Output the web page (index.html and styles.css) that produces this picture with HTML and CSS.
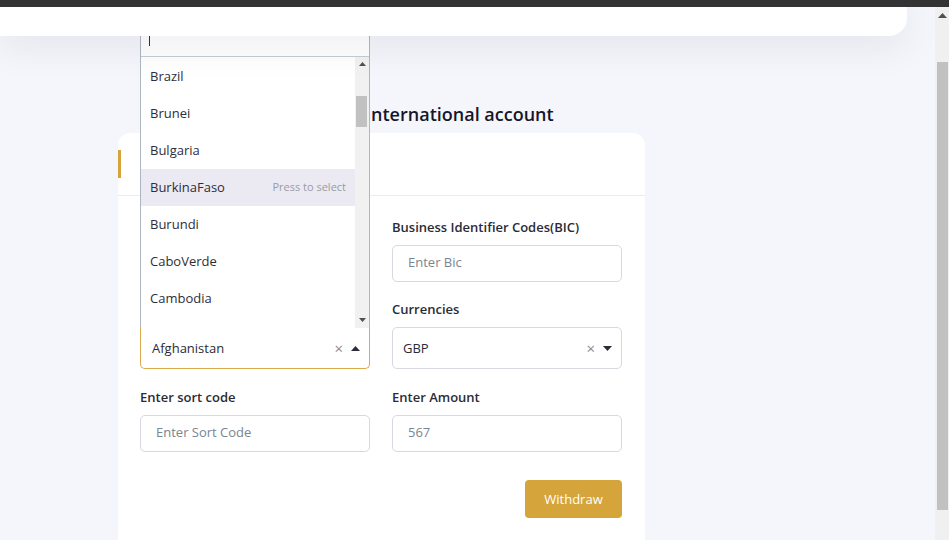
FILE: index.html
```html
<!DOCTYPE html>
<html lang="en">
<head>
<meta charset="utf-8">
<title>Withdraw</title>
<link rel="stylesheet" href="styles.css">
</head>
<body>
<div class="topbar"></div>
<div class="viewport">
  <div class="main">
    <header class="header"></header>
    <section class="content">
      <h1 class="title">Withdraw to an international account</h1>
      <div class="card">
        <div class="tabs">
          <div class="tab tab-active"><span class="covered">Bank transfer</span></div>
        </div>
        <div class="form">
          <div class="field">
            <div class="label covered">IBAN</div>
            <div class="input placeholder"><span class="covered">Enter IBAN</span></div>
          </div>
          <div class="field">
            <div class="label">Business Identifier Codes(BIC)</div>
            <div class="input placeholder">Enter Bic</div>
          </div>
          <div class="field">
            <div class="label covered">Country</div>
            <div class="select select-open">
              <span class="select-value">Afghanistan</span>
              <span class="clear">×</span>
              <svg class="caret" width="9" height="5" viewBox="0 0 9 5"><path d="M0 5 L4.5 0 L9 5 Z" fill="#2b2b3a"/></svg>
              <div class="dropdown">
                <div class="search"><span class="cursor"></span></div>
                <div class="list-wrap">
                  <ul class="list">
                    <li class="option">Brazil</li>
                    <li class="option">Brunei</li>
                    <li class="option">Bulgaria</li>
                    <li class="option option-hover">BurkinaFaso<span class="hint">Press to select</span></li>
                    <li class="option">Burundi</li>
                    <li class="option">CaboVerde</li>
                    <li class="option">Cambodia</li>
                  </ul>
                  <div class="list-scroll">
                    <svg class="arrow" width="7" height="4" viewBox="0 0 7 4"><path d="M0 4 L3.5 0 L7 4 Z" fill="#505050"/></svg>
                    <div class="list-track"><div class="list-thumb"></div></div>
                    <svg class="arrow" width="7" height="4" viewBox="0 0 7 4"><path d="M0 0 L3.5 4 L7 0 Z" fill="#505050"/></svg>
                  </div>
                </div>
              </div>
            </div>
          </div>
          <div class="field">
            <div class="label">Currencies</div>
            <div class="select">
              <span class="select-value">GBP</span>
              <span class="clear">×</span>
              <svg class="caret" width="9" height="5" viewBox="0 0 9 5"><path d="M0 0 L4.5 5 L9 0 Z" fill="#2b2b3a"/></svg>
            </div>
          </div>
          <div class="field field-low">
            <div class="label">Enter sort code</div>
            <div class="input placeholder">Enter Sort Code</div>
          </div>
          <div class="field field-low">
            <div class="label">Enter Amount</div>
            <div class="input value">567</div>
          </div>
          <div class="actions">
            <button class="btn">Withdraw</button>
          </div>
        </div>
      </div>
    </section>
  </div>
  <div class="scrollbar">
    <svg class="page-arrow" width="9" height="5" viewBox="0 0 9 5"><path d="M0 5 L4.5 0 L9 5 Z" fill="#505050"/></svg>
    <div class="page-track"><div class="page-thumb"></div></div>
  </div>
</div>
</body>
</html>
```

FILE: styles.css
```css
* { box-sizing: border-box; }
html, body { margin: 0; padding: 0; }
body {
  font-family: "Open Sans", "Noto Sans", sans-serif;
  background: #f5f6fb;
  color: #2e2e3a;
  overflow: hidden;
  height: 540px;
}
.topbar { height: 7px; background: #333333; }
.viewport { display: flex; height: 533px; overflow: hidden; }
.main { flex: 1; position: relative; overflow: hidden; }
.header {
  position: relative;
  z-index: 5;
  height: 29px;
  margin-right: 28px;
  background: #ffffff;
  border-bottom-right-radius: 18px;
  box-shadow: 0 6px 40px rgba(30, 30, 70, 0.10);
}
.content { padding-left: 118px; width: 645px; }
.title {
  margin: 66px 0 7px;
  width: 527px;
  padding-left: 18px;
  text-align: center;
  font-size: 18px;
  font-weight: 600;
  line-height: 24px;
  color: #16162a;
}
.covered { visibility: hidden; }
.card {
  width: 527px;
  min-height: 430px;
  background: #ffffff;
  border-radius: 12px;
}
.tabs {
  height: 63px;
  border-bottom: 1px solid #ececf0;
  padding-top: 17px;
}
.tab {
  height: 28px;
  padding-left: 20px;
  line-height: 28px;
  font-size: 14px;
  font-weight: 600;
  color: #333;
}
.tab-active { border-left: 3px solid #d4a33a; }
.form {
  display: grid;
  grid-template-columns: 230px 230px;
  column-gap: 22px;
  row-gap: 18px;
  padding: 22px 23px 0 22px;
}
.field { display: flex; flex-direction: column; }
.field-low { margin-top: 1px; }
.label {
  font-size: 13px;
  font-weight: 600;
  line-height: 18px;
  height: 18px;
  color: #2b2b36;
  margin-bottom: 9px;
}
.input {
  height: 37px;
  border: 1px solid #d6d9df;
  border-radius: 5px;
  padding-left: 15px;
  font-size: 13px;
  line-height: 33px;
  background: #fff;
}
.placeholder { color: #7b8491; }
.value { color: #7b8491; }
.select {
  position: relative;
  height: 42px;
  border: 1px solid #d6d9df;
  border-radius: 5px;
  display: flex;
  align-items: center;
  padding: 0 9px 0 10px;
  font-size: 13px;
  color: #2b2b36;
  background: #fff;
}
.select-open {
  border-color: #d9a94a;
  border-top-color: #c7cbd3;
  border-radius: 0 0 5px 5px;
  padding-left: 11px;
}
.select-value { flex: 1; }
.clear { color: #8a8a93; font-size: 15px; margin-right: 8px; line-height: 1; }
.caret { display: block; }
.dropdown {
  position: absolute;
  left: -1px;
  right: -1px;
  bottom: 100%;
  height: 320px;
  display: flex;
  flex-direction: column;
  background: #fff;
  border: 1px solid #aeb6c3;
  border-bottom: none;
  z-index: 4;
}
.search {
  height: 48px;
  border-bottom: 1px solid #c5cbd5;
  position: relative;
  background: #fff;
}
.cursor {
  position: absolute;
  left: 8px;
  top: 27px;
  width: 1px;
  height: 10px;
  background: #333;
}
.list-wrap { flex: 1; display: flex; overflow: hidden; }
.list {
  flex: 1;
  list-style: none;
  margin: 0;
  padding: 1px 0 0;
  overflow: hidden;
}
.option {
  height: 37px;
  display: flex;
  align-items: center;
  justify-content: space-between;
  padding: 0 9px 2px 9px;
  font-size: 13px;
  color: #2e2e3a;
}
.option:first-child { padding-bottom: 1px; }
.option-hover { background: #ebeaf3; }
.hint { font-size: 11px; color: #9a9aa4; }
.list-scroll {
  width: 14px;
  background: #f1f1f1;
  display: flex;
  flex-direction: column;
  align-items: center;
  padding: 5px 0 6px;
}
.arrow { display: block; flex: none; }
.list-track { flex: 1; width: 100%; padding: 30px 2px 0 1px; }
.list-thumb { height: 31px; background: #c1c1c1; }
.actions {
  grid-column: 2;
  display: flex;
  justify-content: flex-end;
  padding-top: 10px;
}
.btn {
  width: 97px;
  height: 38px;
  border: none;
  border-radius: 4px;
  background: #d5a43a;
  color: #fff;
  font-family: inherit;
  font-size: 13px;
  padding-bottom: 2px;
}
.scrollbar {
  width: 14px;
  background: #f0f0f0;
  display: flex;
  flex-direction: column;
  align-items: center;
  padding-top: 6px;
}
.page-arrow { display: block; }
.page-track { flex: 1; width: 100%; padding: 44px 1px 23px 2px; }
.page-thumb { height: 448px; background: #c1c1c1; }
```
